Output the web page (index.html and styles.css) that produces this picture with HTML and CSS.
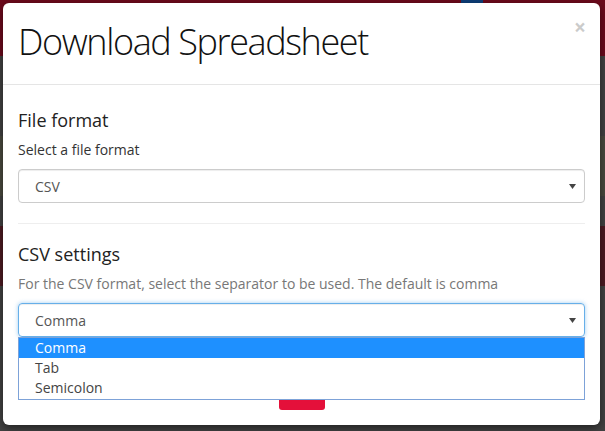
FILE: index.html
```html
<!DOCTYPE html>
<html lang="en">
<head>
<meta charset="utf-8">
<title>Download Spreadsheet</title>
<link rel="stylesheet" href="styles.css">
</head>
<body>
<div class="page">
  <div class="topbar"><span class="topbar-accent"></span></div>
  <div class="page-band band-olive"></div>
  <div class="page-band band-red"></div>
</div>
<div class="modal">
  <div class="modal-header">
    <h1 class="modal-title">Download Spreadsheet</h1>
    <span class="close">&times;</span>
  </div>
  <div class="modal-body">
    <h4 class="section-title">File format</h4>
    <p class="help">Select a file format</p>
    <div class="select">
      <span>CSV</span>
      <svg class="caret" width="7" height="5" viewBox="0 0 7 5"><path d="M0 0h7L3.5 5z" fill="#444"/></svg>
    </div>
    <hr class="divider">
    <h4 class="section-title">CSV settings</h4>
    <p class="help muted">For the CSV format, select the separator to be used. The default is comma</p>
    <div class="select-wrap">
      <div class="select focused">
        <span>Comma</span>
        <svg class="caret" width="7" height="5" viewBox="0 0 7 5"><path d="M0 0h7L3.5 5z" fill="#444"/></svg>
      </div>
      <ul class="dropdown">
        <li class="active">Comma</li>
        <li>Tab</li>
        <li>Semicolon</li>
      </ul>
    </div>
    <div class="actions">
      <button class="btn-ok">OK</button>
    </div>
  </div>
</div>
</body>
</html>
```

FILE: styles.css
```css
html, body {
  margin: 0;
  padding: 0;
}
body {
  width: 605px;
  height: 431px;
  overflow: hidden;
  background: #424242;
  font-family: "Open Sans", "Noto Sans", sans-serif;
  position: relative;
}
.page {
  display: flex;
  flex-direction: column;
}
.topbar {
  height: 56px;
  background: #6c0a1c;
  position: relative;
}
.topbar-accent {
  display: block;
  margin-left: 461px;
  width: 22px;
  height: 6px;
  background: #0d3e78;
}
.page-band {
  height: 60px;
}
.band-olive {
  margin-top: 80px;
  background: #4a4a3f;
}
.band-red {
  margin-top: 30px;
  background: #4d1a22;
}
.modal {
  position: absolute;
  top: 3px;
  left: 3px;
  width: 597px;
  box-sizing: border-box;
  background: #fff;
  border-radius: 6px;
  box-shadow: 0 3px 9px rgba(0,0,0,.5);
}
.modal-header {
  display: flex;
  justify-content: space-between;
  align-items: flex-start;
  padding: 15px;
  border-bottom: 1px solid #e5e5e5;
}
.modal-title {
  margin: 0;
  font-size: 36px;
  font-weight: 300;
  line-height: 48px;
  padding-bottom: 3px;
  color: #111;
  letter-spacing: -1.4px;
}
.close {
  font-size: 21px;
  font-weight: 700;
  line-height: 1;
  color: #000;
  opacity: .2;
  margin-top: -1px;
  margin-right: -1px;
}
.modal-body {
  padding: 15px;
}
.section-title {
  margin: 10px 0;
  font-size: 18px;
  font-weight: 400;
  line-height: 20px;
  color: #222;
}
.help {
  margin: 0 0 9px;
  font-size: 14px;
  line-height: 20px;
  color: #333;
}
.help.muted {
  color: #777;
}
.select {
  height: 34px;
  box-sizing: border-box;
  border: 1px solid #ccc;
  border-radius: 4px;
  display: flex;
  align-items: center;
  justify-content: space-between;
  padding: 0 8px 0 16px;
  font-size: 14px;
  color: #555;
  box-shadow: inset 0 1px 1px rgba(0,0,0,.075);
}
.select.focused {
  border-color: #66afe9;
  box-shadow: inset 0 1px 1px rgba(0,0,0,.075), 0 0 4px rgba(102,175,233,.6);
}
.divider {
  margin: 20px 0;
  border: 0;
  border-top: 1px solid #eee;
}
.select-wrap {
  position: relative;
}
.dropdown {
  position: absolute;
  top: 34px;
  left: 0;
  right: 0;
  margin: 0;
  padding: 0 0 1px;
  list-style: none;
  background: #fff;
  border: 1px solid #7da2d8;
  z-index: 2;
}
.dropdown li {
  height: 20px;
  line-height: 20px;
  padding-left: 16px;
  font-size: 14px;
  color: #444;
}
.dropdown li.active {
  background: #1e90ff;
  color: #fff;
}
.actions {
  display: flex;
  justify-content: center;
  margin-top: 40px;
}
.btn-ok {
  width: 46px;
  height: 33px;
  border: 0;
  border-radius: 3px;
  background: #e4103a;
  color: #fff;
  font-family: inherit;
  font-size: 13px;
  font-weight: 600;
}
```
